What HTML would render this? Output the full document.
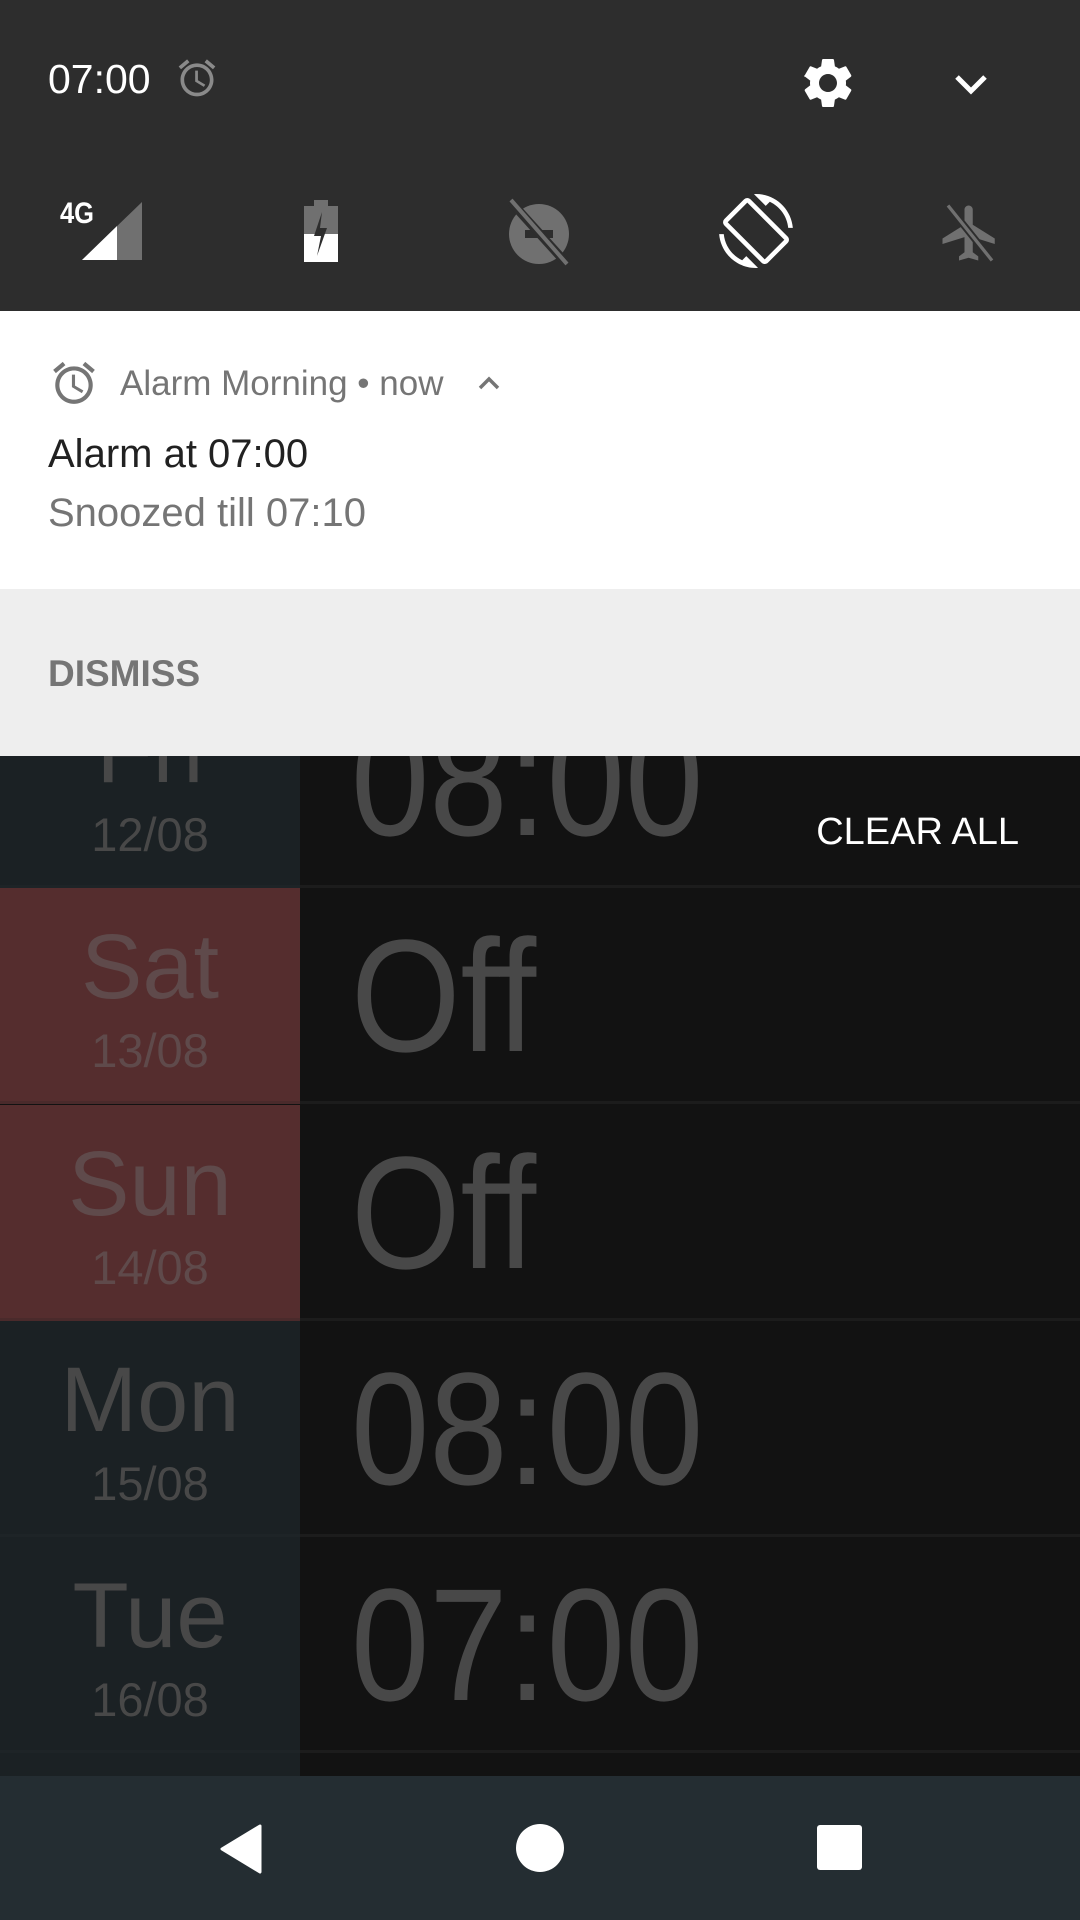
<!DOCTYPE html>
<html style="width:1080px;height:1920px;overflow:hidden"><head><meta charset="utf-8"><style>
*{margin:0;padding:0;box-sizing:border-box}
body{width:1080px;height:1920px;overflow:hidden;background:#121212;font-family:"Liberation Sans",sans-serif;position:relative}
.a{position:absolute}
.t{position:absolute;line-height:1;white-space:nowrap}
.row{position:absolute;left:0;width:1080px;height:216px;overflow:hidden}
.row .l{position:absolute;left:0;top:0;width:300px;height:100%;background:#1b2124}
.row.r .l{background:#552d2e}
.row .sep{position:absolute;left:0;bottom:0;width:1080px;height:3px;background:#1c1c1c}
.row .sepl{position:absolute;left:0;bottom:0;width:300px;height:3px;background:#1e2427}
.row.r .sepl{background:#4a2a2b}
.day{position:absolute;left:0;width:300px;text-align:center;font-size:92px;color:#484848;line-height:1;top:33px}
.date{position:absolute;left:0;width:300px;text-align:center;font-size:47px;color:#484848;line-height:1;top:139px}
.row.r .day,.row.r .date{color:#5f4a4b}
.tm{position:absolute;left:351px;top:28px;font-size:160px;line-height:1;color:#484848;transform:scaleX(0.88);transform-origin:left}
</style></head><body>
<div class="row" style="top:672px"><div class="l"></div><div class="day">Fri</div><div class="date">12/08</div><div class="tm">08:00</div><div class="sep"></div><div class="sepl"></div></div>
<div class="row r" style="top:888px"><div class="l"></div><div class="day">Sat</div><div class="date">13/08</div><div class="tm">Off</div><div class="sep"></div><div class="sepl"></div></div>
<div class="row r" style="top:1105px"><div class="l"></div><div class="day">Sun</div><div class="date">14/08</div><div class="tm">Off</div><div class="sep"></div><div class="sepl"></div></div>
<div class="row" style="top:1321px"><div class="l"></div><div class="day">Mon</div><div class="date">15/08</div><div class="tm">08:00</div><div class="sep"></div><div class="sepl"></div></div>
<div class="row" style="top:1537px"><div class="l"></div><div class="day">Tue</div><div class="date">16/08</div><div class="tm">07:00</div><div class="sep"></div><div class="sepl"></div></div>
<div class="row" style="top:1753px;height:30px"><div class="l"></div></div>
<div class="t" style="right:61px;top:813px;font-size:38px;color:#fff">CLEAR ALL</div>

<div class="a" style="left:0;top:0;width:1080px;height:311px;background:#2d2d2d;box-shadow:0 3px 4px rgba(0,0,0,.3)"></div>
<div class="t" style="left:48px;top:59px;font-size:41px;color:#fff">07:00</div>
<svg class="a" style="left:175px;top:56px" width="44" height="44" viewBox="0 0 24 24" fill="#8a8a8a"><path d="M22 5.72l-4.6-3.86-1.29 1.53 4.6 3.86L22 5.72zM7.880 3.39L6.6 1.86 2 5.71l1.29 1.53 4.59-3.85zM12.5 8H11v6l4.75 2.85.75-1.23-4-2.37V8zM12 4c-4.97 0-9 4.03-9 9s4.02 9 9 9c4.97 0 9-4.030 9-9s-4.03-9-9-9zm0 16c-3.87 0-7-3.13-7-7s3.13-7 7-7 7 3.13 7 7-3.13 7-7 7z"/></svg>
<svg class="a" style="left:798px;top:53px" width="60" height="60" viewBox="0 0 24 24" fill="#fff"><path d="M19.14 12.94c.04-.3.06-.61.06-.94 0-.32-.02-.64-.07-.94l2.03-1.58a.49.49 0 0 0 .12-.61l-1.92-3.32a.49.49 0 0 0-.59-.22l-2.39.96c-.5-.38-1.03-.7-1.62-.94l-.36-2.54a.48.48 0 0 0-.48-.41h-3.84c-.24 0-.43.17-.47.41l-.36 2.54c-.59.24-1.130.57-1.62.94l-2.39-.96a.48.48 0 0 0-.59.22L2.74 8.87c-.12.21-.8.47.12.61l2.03 1.58c-.05.3-.09.63-.09.94s.02.64.07.94l-2.03 1.58a.49.49 0 0 0-.12.61l1.92 3.32c.12.22.37.29.59.22l2.39-.96c.5.38 1.03.7 1.62.94l.36 2.54c.05.24.24.41.48.41h3.84c.24 0 .44-.17.47-.41l.36-2.54c.59-.24 1.13-.56 1.62-.94l2.39.96c.22.08.47 0 .59-.22l1.92-3.32c.12-.22.07-.47-.12-.61l-2.01-1.58zM12 15.6c-1.98 0-3.6-1.62-3.6-3.6s1.62-3.6 3.6-3.6 3.6 1.62 3.6 3.6-1.62 3.6-3.6 3.6z"/></svg>
<svg class="a" style="left:951px;top:67px" width="40" height="36" viewBox="0 0 40 36"><path d="M6 10l14 14 14-14" stroke="#fff" stroke-width="5" fill="none"/></svg>
<div class="t" style="left:60px;top:199px;font-size:30px;color:#fff;font-weight:bold;transform:scaleX(.85);transform-origin:left">4G</div>
<svg class="a" style="left:82px;top:202px" width="60" height="60" viewBox="0 0 60 60"><polygon points="60,0 60,58 0,58" fill="#707070"/><polygon points="35,24 35,58 0,58" fill="#fff"/></svg>
<svg class="a" style="left:302px;top:200px" width="40" height="62" viewBox="0 0 40 62"><path d="M12 0h14v6h10v56H2V6h10z" fill="#707070"/><path d="M2 34h34v28H2z" fill="#fff"/><path d="M20 12l-8 24h7l-4 20 10-28h-7z" fill="#2d2d2d"/></svg>
<svg class="a" style="left:505px;top:198px" width="68" height="68" viewBox="0 0 68 68"><circle cx="34" cy="36" r="30" fill="#707070"/><rect x="20" y="32" width="28" height="8" fill="#2d2d2d"/><path d="M6 4l56 62" stroke="#2d2d2d" stroke-width="9"/><path d="M6 2l56 64" stroke="#707070" stroke-width="4"/></svg>
<svg class="a" style="left:719px;top:194px" width="74" height="74" viewBox="0 0 24 24" fill="#fff"><path d="M16.48 2.52c3.27 1.55 5.61 4.72 5.97 8.48h1.5C23.44 4.84 18.29 0 12 0l-.66.03 3.81 3.81 1.33-1.32zm-6.25-.77a1.49 1.49 0 0 0-2.12 0L1.75 8.11a1.49 1.49 0 0 0 0 2.12l12.02 12.02c.59.59 1.54.59 2.12 0l6.36-6.36c.59-.59.59-1.54 0-2.12L10.23 1.75zm4.6 19.44L2.81 9.17l6.36-6.36 12.02 12.02-6.36 6.36zm-7.31.29C4.25 19.94 1.91 16.76 1.55 13H.05C.56 19.16 5.71 24 12 24l.66-.03-3.81-3.81-1.33 1.32z"/></svg>
<svg class="a" style="left:937px;top:200px" width="66" height="66" viewBox="0 0 24 24" fill="#707070"><path d="M21 16v-2l-8-5V3.5c0-.83-.67-1.5-1.5-1.5S10 2.67 10 3.5V9l-8 5v2l8-2.5V19l-2 1.5V22l3.5-1 3.5 1v-1.5L13 19v-5.5l8 2.5z"/><path d="M4 2l16 20" stroke="#2d2d2d" stroke-width="2.6"/><path d="M4 2l16 20" stroke="#707070" stroke-width="1.2"/></svg>

<div class="a" style="left:0;top:311px;width:1080px;height:278px;background:#fff"></div>
<svg class="a" style="left:49px;top:358px" width="50" height="50" viewBox="0 0 24 24" fill="#757575"><path d="M22 5.72l-4.6-3.86-1.29 1.53 4.6 3.86L22 5.72zM7.88 3.39L6.6 1.86 2 5.71l1.29 1.53 4.59-3.85zM12.5 8H11v6l4.75 2.85.75-1.23-4-2.37V8zM12 4c-4.97 0-9 4.03-9 9s4.02 9 9 9c4.97 0 9-4.03 9-9s-4.03-9-9-9zm0 16c-3.87 0-7-3.13-7-7s3.13-7 7-7 7 3.13 7 7-3.13 7-7 7z"/></svg>
<div class="t" style="left:120px;top:366px;font-size:35px;color:#757575">Alarm Morning • now</div>
<svg class="a" style="left:476px;top:374px" width="26" height="18" viewBox="0 0 26 18"><path d="M4 14l9-9 9 9" stroke="#757575" stroke-width="3.5" fill="none"/></svg>
<div class="t" style="left:48px;top:434px;font-size:40px;color:#212121">Alarm at 07:00</div>
<div class="t" style="left:48px;top:493px;font-size:40px;color:#757575">Snoozed till 07:10</div>
<div class="a" style="left:0;top:589px;width:1080px;height:167px;background:#eeeeee"></div>
<div class="t" style="left:48px;top:655px;font-size:37px;color:#757575;font-weight:bold">DISMISS</div>

<div class="a" style="left:0;top:1776px;width:1080px;height:144px;background:#242d32"></div>
<svg class="a" style="left:216px;top:1822px" width="48" height="54" viewBox="0 0 48 54"><path d="M44 4L6 27l38 23z" fill="#fff" stroke="#fff" stroke-width="3" stroke-linejoin="round"/></svg>
<div class="a" style="left:516px;top:1824px;width:48px;height:48px;border-radius:50%;background:#fff"></div>
<div class="a" style="left:817px;top:1825px;width:45px;height:45px;border-radius:3px;background:#fff"></div>
</body></html>
